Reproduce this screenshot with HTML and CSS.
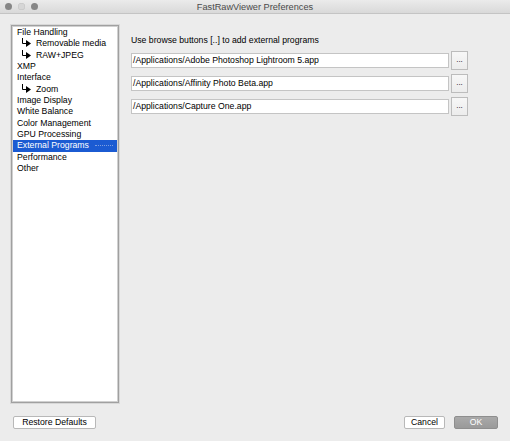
FILE: index.html
```html
<!DOCTYPE html>
<html>
<head>
<meta charset="utf-8">
<link rel="stylesheet" href="styles.css">
</head>
<body>
<div class="window">
  <div class="titlebar">
    <div class="lights">
      <span class="light dark"></span>
      <span class="light pale"></span>
      <span class="light dark"></span>
    </div>
    <div class="title">FastRawViewer Preferences</div>
  </div>
  <div class="content">
    <div class="list">
      <div class="item">File Handling</div>
      <div class="item sub"><svg class="branch" viewBox="0 0 11 9" width="11" height="9"><path d="M1.5 0V5.5H5" fill="none" stroke="#000" stroke-width="1"/><polygon points="5,2 10,5.5 5,9" fill="#000"/></svg>Removable media</div>
      <div class="item sub"><svg class="branch" viewBox="0 0 11 9" width="11" height="9"><path d="M1.5 0V5.5H5" fill="none" stroke="#000" stroke-width="1"/><polygon points="5,2 10,5.5 5,9" fill="#000"/></svg>RAW+JPEG</div>
      <div class="item">XMP</div>
      <div class="item">Interface</div>
      <div class="item sub"><svg class="branch" viewBox="0 0 11 9" width="11" height="9"><path d="M1.5 0V5.5H5" fill="none" stroke="#000" stroke-width="1"/><polygon points="5,2 10,5.5 5,9" fill="#000"/></svg>Zoom</div>
      <div class="item">Image Display</div>
      <div class="item">White Balance</div>
      <div class="item">Color Management</div>
      <div class="item">GPU Processing</div>
      <div class="item selected">External Programs<span class="focus"></span></div>
      <div class="item">Performance</div>
      <div class="item">Other</div>
    </div>
    <div class="panel">
      <div class="hint">Use browse buttons [..] to add external programs</div>
      <div class="row"><div class="field">/Applications/Adobe Photoshop Lightroom 5.app</div><div class="browse">...</div></div>
      <div class="row"><div class="field">/Applications/Affinity Photo Beta.app</div><div class="browse">...</div></div>
      <div class="row"><div class="field">/Applications/Capture One.app</div><div class="browse">...</div></div>
    </div>
  </div>
  <div class="footer">
    <div class="btn restore">Restore Defaults</div>
    <div class="spacer"></div>
    <div class="btn cancel">Cancel</div>
    <div class="btn ok">OK</div>
  </div>
</div>
</body>
</html>
```
FILE: styles.css
```css
html, body {
  margin: 0;
  padding: 0;
}
body {
  width: 510px;
  height: 441px;
  overflow: hidden;
  font-family: "Liberation Sans", Arial, sans-serif;
  font-size: 8.7px;
  color: #000;
  background: #ececec;
}
.window {
  width: 510px;
  height: 441px;
  display: flex;
  flex-direction: column;
  background: #ececec;
}
.titlebar {
  height: 13px;
  flex: none;
  display: flex;
  align-items: center;
  background: linear-gradient(#ebebeb, #d9d9d9);
  border-bottom: 1px solid #c4c4c4;
  position: relative;
}
.lights {
  display: flex;
  gap: 6px;
  padding-left: 5px;
}
.light {
  width: 7px;
  height: 7px;
  border-radius: 50%;
  display: block;
}
.light.dark {
  background: #868686;
}
.light.pale {
  background: #d6d6d6;
  box-shadow: inset 0 0 0 0.5px #c2c2c2;
}
.title {
  position: absolute;
  left: 0;
  right: 0;
  top: 0;
  line-height: 14px;
  text-align: center;
  font-size: 9.2px;
  color: #4a4a4a;
}
.content {
  display: flex;
  padding: 11px 0 0 11px;
  flex: none;
}
.list {
  width: 104px;
  height: 374px;
  background: #fff;
  border: 1px solid #a0a0a0;
  box-shadow: inset 0 0 0 1px #d0d0d0, 0 0 0 1px #d8d8d8;
  padding: 1px 1px;
  margin-right: 12px;
  box-sizing: content-box;
}
.item {
  height: 11.33px;
  line-height: 11.33px;
  padding-left: 4px;
  white-space: nowrap;
  position: relative;
}
.item.sub {
  padding-left: 8px;
}
.branch {
  display: inline-block;
  vertical-align: -1px;
  margin-right: 4px;
}
.item.selected {
  background: #1b5bd2;
  color: #fff;
}
.focus {
  position: absolute;
  left: 82px;
  right: 4px;
  top: 5px;
  border-top: 1px dotted #7d9ee0;
}
.panel {
  display: flex;
  flex-direction: column;
  padding-top: 8px;
}
.hint {
  height: 14px;
  line-height: 14px;
  margin-bottom: 4px;
}
.row {
  display: flex;
  align-items: center;
  gap: 2px;
  margin-bottom: 4px;
}
.field {
  width: 315px;
  height: 13px;
  line-height: 13px;
  background: #fff;
  border: 1px solid #c4c4c4;
  padding-left: 1px;
  box-sizing: content-box;
  white-space: nowrap;
  overflow: hidden;
}
.browse {
  width: 15px;
  height: 17px;
  line-height: 16px;
  text-align: center;
  border: 1px solid #bcbcbc;
  background: linear-gradient(#f7f7f7, #ececec);
  font-size: 8px;
}
.footer {
  display: flex;
  align-items: center;
  padding: 0 12px 0 13px;
  margin-top: 13px;
}
.spacer {
  flex: 1;
}
.btn {
  height: 11px;
  line-height: 11px;
  text-align: center;
  border: 1px solid #b8b8b8;
  border-radius: 2px;
  background: #fff;
  font-size: 8.7px;
}
.restore {
  width: 81px;
}
.cancel {
  width: 39px;
  margin-right: 9px;
}
.ok {
  width: 42px;
  background: linear-gradient(#a9a9a9, #9a9a9a);
  border-color: #8e8e8e;
  color: #fff;
}
```
